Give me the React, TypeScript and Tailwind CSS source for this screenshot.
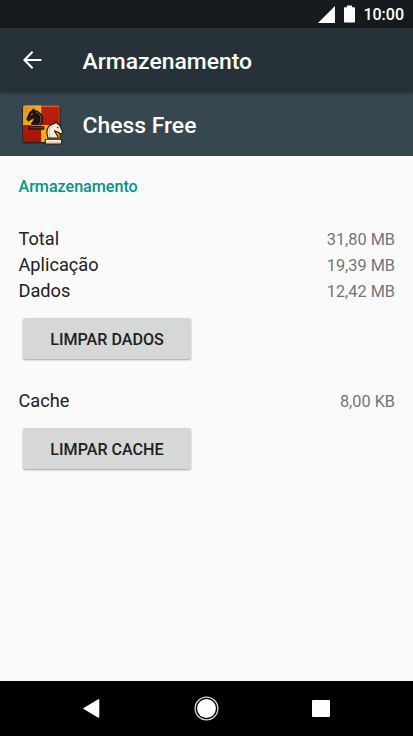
import { ReactNode } from "react";

const HEAD =
    "M7.4 0.8L8.6 2.6C13.6 3.2 17 7 16.6 12L15.4 17.4H5.2C5 14.4 8.2 13 8.8 9.8C7.4 11.2 5.6 11 4.4 12L2.8 13.4L0.8 11.8C0.8 9.2 2.6 8 3.2 5.4C3.6 4 5 3.2 6 2.8Z";

const ChessIcon = () => (
    <svg className="block h-11 w-11 shrink-0" viewBox="0 0 44 44">
        <defs>
            <linearGradient id="gold" x1="0" y1="0" x2="1" y2="1">
                <stop offset="0" stopColor="#e88a14" />
                <stop offset="1" stopColor="#fcc02a" />
            </linearGradient>
            <linearGradient id="red" x1="0" y1="0" x2="0" y2="1">
                <stop offset="0" stopColor="#bd220e" />
                <stop offset="1" stopColor="#a91208" />
            </linearGradient>
            <clipPath id="board">
                <rect x="2" y="1.4" width="36.6" height="36.6" rx="1.8" />
            </clipPath>
        </defs>
        <rect x="1.2" y="1.6" width="38.4" height="38" rx="2.4" fill="#14181a" opacity="0.75" />
        <g clipPath="url(#board)">
            <rect x="2" y="1" width="37" height="38" fill="url(#red)" />
            <rect x="2" y="1" width="18.2" height="20" fill="url(#gold)" />
            <rect x="20.2" y="21" width="19" height="18" fill="#f7ac1d" />
            <path d="M2 2H39" stroke="#f6bf78" strokeWidth="1" opacity="0.75" />
            <path d="M38.2 2V20" stroke="#e2765c" strokeWidth="0.8" opacity="0.7" />
        </g>
        {/* black knight */}
        <g transform="translate(5 3.8)">
            <path d={HEAD} fill="#21130e" stroke="#21130e" strokeWidth="0.8" strokeLinejoin="round" />
            <path d="M10 4.4C14.4 5.8 15.4 9.4 14.6 13.4L13.8 16.6" stroke="#9a8066" strokeWidth="0.7" fill="none" />
            <path d="M4.6 17.6H16.4" stroke="#c7a889" strokeWidth="0.8" />
            <rect x="2.4" y="18.4" width="16" height="3.6" rx="1" fill="#21130e" />
            <path d="M4 20H17" stroke="#75645a" strokeWidth="0.8" />
            <path d="M5 6.8L6.8 6" stroke="#d0b898" strokeWidth="0.8" />
        </g>
        {/* white knight, mirrored */}
        <g transform="translate(42.4 16.8) scale(-1 1)">
            <path d={HEAD} fill="#f3ecdc" stroke="#35180c" strokeWidth="1.2" strokeLinejoin="round" />
            <path d="M10.6 5C14 6.4 14.8 9.6 14 13.4L13.2 16.4" stroke="#b7a68a" strokeWidth="0.8" fill="none" />
            <rect x="1.8" y="18.4" width="16.4" height="4.8" rx="1.3" fill="#f3ecdc" stroke="#35180c" strokeWidth="1.1" />
            <path d="M3.4 21.4H16.8" stroke="#c9b898" strokeWidth="0.8" />
            <path d="M4.8 7L6.6 6.2" stroke="#35180c" strokeWidth="1" />
        </g>
    </svg>
);

const StatusBar = () => (
    <div className="flex h-7 shrink-0 items-center justify-end bg-[#151a1c] pr-[9px] text-white">
        <svg className="mr-[9px] h-[17px] w-[17px]" viewBox="0 0 17 17">
            <path d="M17 0V17H0Z" fill="#fff" />
        </svg>
        <svg className="mr-2 h-[18px] w-[11px]" viewBox="0 0 11 18">
            <path d="M3 0.5H8V2.2H10.2Q11 2.2 11 3V16.7Q11 17.5 10.2 17.5H0.8Q0 17.5 0 16.7V3Q0 2.2 0.8 2.2H3Z" fill="#fff" />
        </svg>
        <span className="pt-0.5 text-[16px] leading-[26px] font-medium">10:00</span>
    </div>
);

const Row = ({ label, value }: { label: string; value: string }) => (
    <div className="flex h-[26px] items-center justify-between">
        <span className="text-[18.2px] text-[#212121]">{label}</span>
        <span className="pt-px text-[16.3px] leading-6 text-[#757575]">{value}</span>
    </div>
);

const Button = ({ children }: { children: ReactNode }) => (
    <button className="ml-[4.5px] block h-[41px] w-[168px] rounded-[2px] bg-[#d6d7d7] pt-[3px] text-[16.1px] leading-6 font-medium text-[#212121] shadow-[0_1px_2px_rgba(0,0,0,0.35)]">
        {children}
    </button>
);

const App = () => {
    return (
        <div className="flex h-[736px] w-[413px] flex-col overflow-hidden bg-[#fafafa] font-[Roboto,sans-serif]">
            <StatusBar />
            <header className="z-10 flex h-16 shrink-0 items-center bg-[#263238] pl-[23px] text-white shadow-[0_1px_3px_rgba(0,0,0,0.35)]">
                <svg className="h-[18px] w-[19px]" viewBox="0 0 19 18">
                    <path d="M9.6 0.8L1.4 9L9.6 17.2M1.4 9H18.4" fill="none" stroke="#fff" strokeWidth="2.1" />
                </svg>
                <h1 className="ml-[40.5px] pt-1 text-[22.9px] font-medium">Armazenamento</h1>
            </header>
            <div className="flex h-16 shrink-0 items-center bg-[#37474f] pl-[21px] text-white">
                <div className="pt-1">
                    <ChessIcon />
                </div>
                <h2 className="ml-[17.5px] pt-1 text-[22.9px] font-medium">Chess Free</h2>
            </div>
            <main className="flex-1 pr-[18px] pl-[18.5px] pt-[19px]">
                <h3 className="text-[16.1px] leading-6 font-medium text-[#009688]">Armazenamento</h3>
                <div className="mt-[27px]">
                    <Row label="Total" value="31,80 MB" />
                    <Row label="Aplicação" value="19,39 MB" />
                    <Row label="Dados" value="12,42 MB" />
                </div>
                <div className="mt-[14px]">
                    <Button>LIMPAR DADOS</Button>
                </div>
                <div className="mt-[29px]">
                    <Row label="Cache" value="8,00 KB" />
                </div>
                <div className="mt-[14px]">
                    <Button>LIMPAR CACHE</Button>
                </div>
            </main>
            <nav className="flex h-[55px] shrink-0 items-center bg-black pl-[83px]">
                <svg className="h-[19px] w-[17px]" viewBox="0 0 17 19">
                    <path d="M15.6 0.9V18.1L1 9.5Z" fill="#fff" stroke="#fff" strokeWidth="1.4" strokeLinejoin="round" />
                </svg>
                <svg className="ml-[94px] h-[25px] w-[25px]" viewBox="0 0 25 25">
                    <circle cx="12.5" cy="12.5" r="11.4" fill="none" stroke="#d8d8d8" strokeWidth="1.3" />
                    <circle cx="12.5" cy="12.5" r="9.4" fill="#fff" />
                </svg>
                <div className="ml-[93px] h-[17px] w-[18px] rounded-[1px] bg-white" />
            </nav>
        </div>
    );
};

export default App;
